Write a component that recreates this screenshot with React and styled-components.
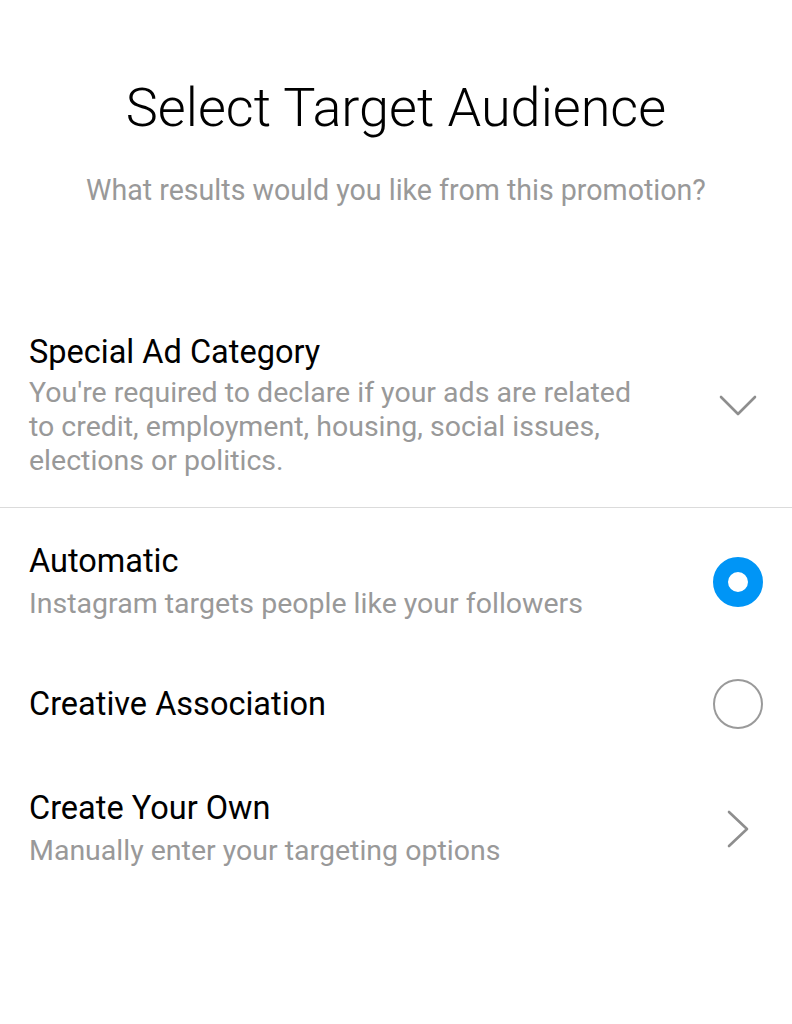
import styled, { createGlobalStyle } from "styled-components";

const GlobalStyle = createGlobalStyle`
  html, body {
    margin: 0;
    padding: 0;
    background: #fff;
  }
  body {
    font-family: Roboto, "Liberation Sans", sans-serif;
    -webkit-font-smoothing: antialiased;
  }
`;

const Page = styled.div`
  width: 792px;
  min-height: 1024px;
  background: #fff;
`;

const Header = styled.header`
  display: flex;
  flex-direction: column;
  align-items: center;
  padding-top: 77px;
  margin-bottom: 125px;
`;

const Title = styled.h1`
  margin: 0;
  font-size: 54px;
  line-height: 62px;
  font-weight: 300;
  color: #000;
`;

const Subtitle = styled.p`
  margin: 33px 0 0;
  font-size: 28.6px;
  line-height: 36px;
  color: #999;
`;

const Section = styled.div`
  display: flex;
  align-items: center;
  gap: 24px;
  padding: ${({ $top = 32, $bottom = 32 }) => `${$top}px 29px ${$bottom}px`};
  border-bottom: ${({ $divider }) => ($divider ? "1px solid #dbdbdb" : "none")};
`;

const Text = styled.div`
  flex: 1;
  min-width: 0;
`;

const RowTitle = styled.div`
  font-size: 32.5px;
  line-height: 38px;
  color: #000;
`;

const RowDesc = styled.div`
  margin-top: ${({ $gap = 7 }) => $gap}px;
  font-size: 28.5px;
  line-height: 34px;
  color: #999;
  max-width: ${({ $max }) => $max || "none"};
`;

const Side = styled.div`
  width: 50px;
  height: 38px;
  flex: none;
  display: flex;
  align-items: center;
  justify-content: center;
`;

const Radio = styled.div`
  box-sizing: border-box;
  flex: none;
  width: 50px;
  height: 50px;
  border-radius: 50%;
  border: ${({ $on }) => ($on ? "15px solid #0095f6" : "2px solid #9a9a9a")};
  background: #fff;
`;

const ChevronDown = () => (
  <svg width="38" height="24" viewBox="0 0 38 24" fill="none">
    <path d="M2 3 L19 20 L36 3" stroke="#8e8e8e" strokeWidth="2.6" strokeLinecap="round" strokeLinejoin="round" />
  </svg>
);

const ChevronRight = () => (
  <svg width="22" height="38" viewBox="0 0 22 38" fill="none">
    <path d="M2 2 L20 19 L2 36" stroke="#8e8e8e" strokeWidth="2.6" strokeLinecap="round" strokeLinejoin="round" />
  </svg>
);

export default function App() {
  return (
    <Page>
      <GlobalStyle />
      <Header>
        <Title>Select Target Audience</Title>
        <Subtitle>What results would you like from this promotion?</Subtitle>
      </Header>

      <Section $divider $top={0} $bottom={29}>
        <Text>
          <RowTitle>Special Ad Category</RowTitle>
          <RowDesc $gap={5} $max="615px">
            You're required to declare if your ads are related to credit,
            employment, housing, social issues, elections or politics.
          </RowDesc>
        </Text>
        <Side>
          <ChevronDown />
        </Side>
      </Section>

      <Section $top={34}>
        <Text>
          <RowTitle>Automatic</RowTitle>
          <RowDesc>Instagram targets people like your followers</RowDesc>
        </Text>
        <Side>
          <Radio $on />
        </Side>
      </Section>

      <Section $bottom={34}>
        <Text>
          <RowTitle>Creative Association</RowTitle>
        </Text>
        <Side>
          <Radio />
        </Side>
      </Section>

      <Section>
        <Text>
          <RowTitle>Create Your Own</RowTitle>
          <RowDesc>Manually enter your targeting options</RowDesc>
        </Text>
        <Side>
          <ChevronRight />
        </Side>
      </Section>
    </Page>
  );
}
